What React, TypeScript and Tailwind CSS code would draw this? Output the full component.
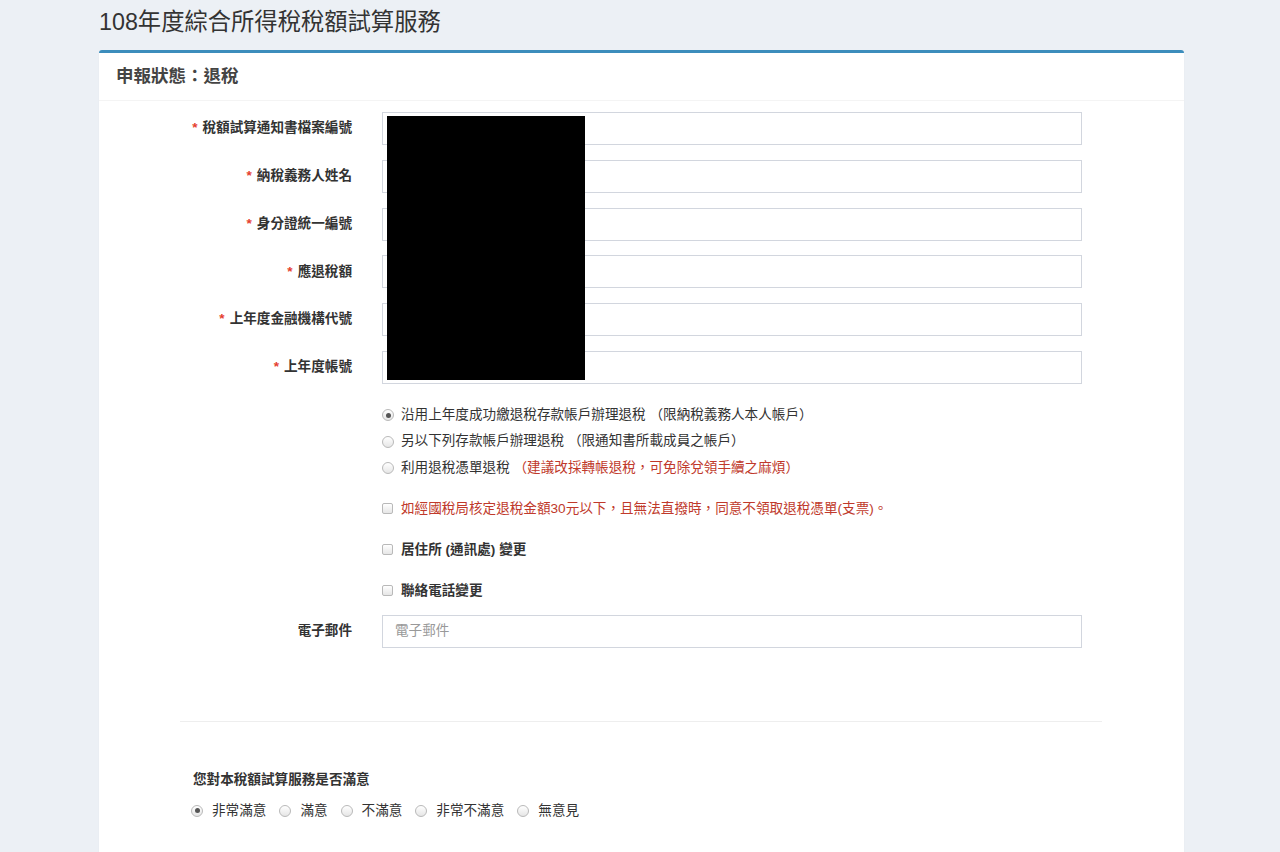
import React from "react";

const font = { fontFamily: '"Liberation Sans", "Noto Sans CJK TC", sans-serif' };

function Radio({ checked = false }: { checked?: boolean }) {
  return (
    <span className="flex h-[12px] w-[12px] shrink-0 items-center justify-center rounded-full border border-[#b9b9b9] bg-gradient-to-b from-white to-[#e6e6e6]">
      {checked && <span className="h-[5px] w-[5px] rounded-full bg-[#555]" />}
    </span>
  );
}

function Checkbox() {
  return (
    <span className="h-[11px] w-[11px] shrink-0 rounded-[2px] border border-[#b9b9b9] bg-gradient-to-b from-white to-[#e6e6e6]" />
  );
}

const fields = [
  "稅額試算通知書檔案編號",
  "納稅義務人姓名",
  "身分證統一編號",
  "應退稅額",
  "上年度金融機構代號",
  "上年度帳號",
];

const satisfaction = ["非常滿意", "滿意", "不滿意", "非常不滿意", "無意見"];

export default function App() {
  return (
    <div
      className="relative min-h-[852px] overflow-hidden bg-[#ecf0f5] text-[13.6px] text-[#333]"
      style={font}
    >
      <div className="ml-[99px] w-[1085px]">
        <div className="h-[50px] pt-[8px]">
          <h1 className="text-[23.3px] leading-[28px] font-normal text-[#333]">
            108年度綜合所得稅稅額試算服務
          </h1>
        </div>

        <div className="h-[820px] rounded-t-[3px] border-t-[3px] border-[#3c8dbc] bg-white shadow-[0_1px_1px_rgba(0,0,0,0.1)]">
          <div className="flex h-[48px] items-center border-b border-[#f4f4f4] pl-[17px]">
            <span className="text-[17.5px] font-bold text-[#444]">申報狀態：退稅</span>
          </div>

          <div className="pt-[11px]">
            {fields.map((label) => (
              <div key={label} className="mb-[14.8px] flex items-center">
                <div className="w-[253px] text-right font-bold">
                  <span className="mr-[5px] text-[#e5402f]">*</span>
                  {label}
                </div>
                <div className="ml-[30px] h-[33px] w-[700px] border border-[#d2d6de] bg-white" />
              </div>
            ))}

            <div className="pt-[3px] pl-[283px]">
              <div className="flex h-[26.5px] items-center gap-[7px]">
                <Radio checked />
                <span>沿用上年度成功繳退稅存款帳戶辦理退稅 （限納稅義務人本人帳戶）</span>
              </div>
              <div className="flex h-[26.5px] items-center gap-[7px]">
                <Radio />
                <span>另以下列存款帳戶辦理退稅 （限通知書所載成員之帳戶）</span>
              </div>
              <div className="flex h-[26.5px] items-center gap-[7px]">
                <Radio />
                <span>
                  利用退稅憑單退稅 <span className="text-[#c0392b]">（建議改採轉帳退稅，可免除兌領手續之麻煩）</span>
                </span>
              </div>
            </div>

            <div className="mt-[7px] pl-[283px]">
              <div className="flex h-[41px] items-center gap-[8px]">
                <Checkbox />
                <span className="text-[#c0392b]">
                  如經國稅局核定退稅金額30元以下，且無法直撥時，同意不領取退稅憑單(支票)。
                </span>
              </div>
              <div className="flex h-[41px] items-center gap-[8px]">
                <Checkbox />
                <span className="font-bold">居住所 (通訊處) 變更</span>
              </div>
              <div className="flex h-[41px] items-center gap-[8px]">
                <Checkbox />
                <span className="font-bold">聯絡電話變更</span>
              </div>
            </div>

            <div className="mt-[3.5px] flex items-center">
              <div className="w-[253px] text-right font-bold">電子郵件</div>
              <div className="ml-[30px] flex h-[33px] w-[700px] items-center border border-[#d2d6de] bg-white px-[12px] text-[#999]">
                電子郵件
              </div>
            </div>

            <div className="mt-[73px] ml-[81px] w-[922px] border-t border-[#eee]" />

            <div className="mt-[48px] pl-[94px]">
              <div className="h-[20px] leading-[20px] font-bold">您對本稅額試算服務是否滿意</div>
              <div className="mt-[11px] flex h-[20px] items-center">
                {satisfaction.map((s, i) => (
                  <div key={s} className={`flex items-center gap-[9px] ${i > 0 ? "ml-[13px]" : "-ml-[2px]"}`}>
                    <Radio checked={i === 0} />
                    <span>{s}</span>
                  </div>
                ))}
              </div>
            </div>
          </div>
        </div>
      </div>

      <div className="absolute left-[387px] top-[116px] h-[264px] w-[198px] bg-black" />
    </div>
  );
}
